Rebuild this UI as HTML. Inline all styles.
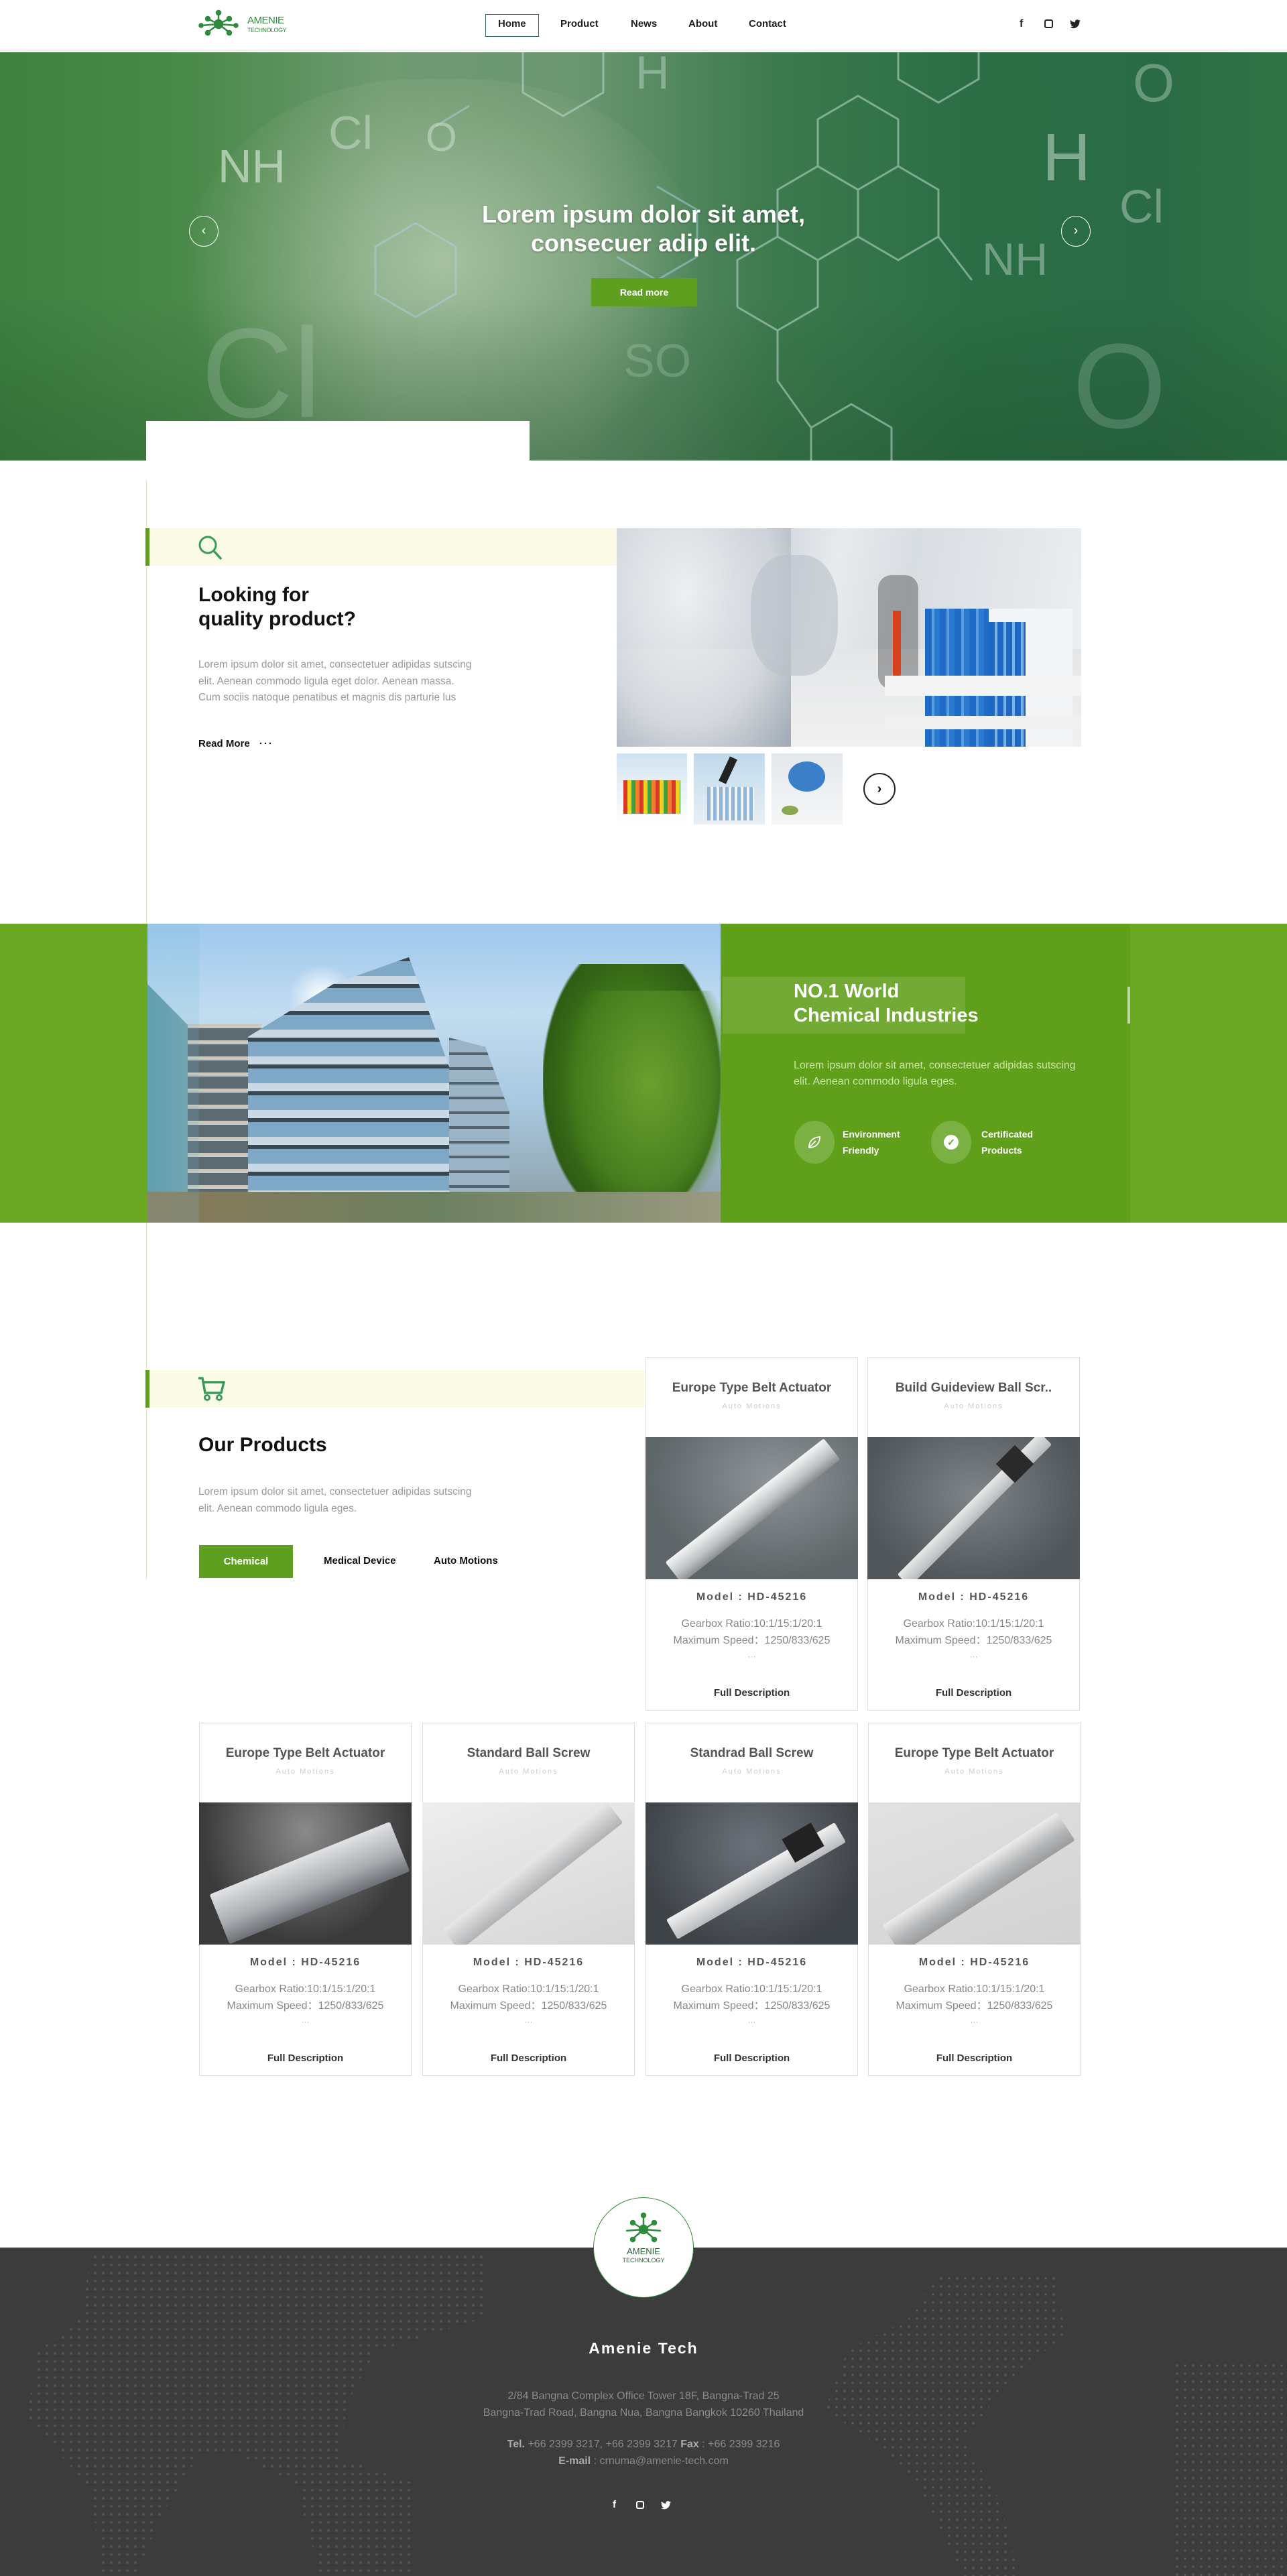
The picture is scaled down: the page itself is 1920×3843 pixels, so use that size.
<!DOCTYPE html>
<html><head><meta charset="utf-8">
<style>
*{margin:0;padding:0;box-sizing:border-box}
body{width:1920px;height:3843px;position:relative;background:#fff;font-family:"Liberation Sans",Arial,sans-serif;overflow:hidden}
.a{position:absolute}
.nav a{position:absolute;top:27px;font-size:15px;font-weight:bold;color:#222;text-decoration:none}
.card{position:absolute;width:317px;height:527px;border:1px solid #ddd;background:#fff;text-align:center}
.card .t{position:absolute;left:0;right:0;top:34px;font-size:19px;font-weight:bold;color:#555}
.card .s{position:absolute;left:0;right:0;top:66px;font-size:11px;color:#ccc;letter-spacing:2px}
.card .im{position:absolute;left:-1px;right:-1px;top:118px;height:212px;overflow:hidden}
.card .m{position:absolute;left:0;right:0;top:348px;font-size:16px;font-weight:bold;color:#555;letter-spacing:2px}
.card .g{position:absolute;left:0;right:0;top:384px;font-size:16px;color:#888;line-height:25px}
.card .d{position:absolute;left:0;right:0;top:438px;font-size:12px;color:#aaa}
.card .f{position:absolute;left:0;right:0;top:491px;font-size:15px;font-weight:bold;color:#333}
.bar{position:absolute;height:34px;border-radius:3px;transform-origin:center}
.ic{position:absolute;width:60px;height:64px;border-radius:50%;background:rgba(255,255,255,.18)}
.dots{position:absolute;background-image:radial-gradient(circle,#555 1.7px,transparent 2.1px);background-size:12px 12px}
</style></head><body>

<!-- HEADER -->
<div class="a" style="left:0;top:0;width:1920px;height:76px;background:#fff;border-bottom:2px solid #f0f0f0"></div>
<svg class="a" style="left:296px;top:14px" width="60" height="44" viewBox="0 0 60 44">
<g stroke="#2e8b3e" stroke-width="2.5" fill="#2e8b3e">
<line x1="30" y1="22" x2="30" y2="6"/><line x1="30" y1="22" x2="14" y2="14"/><line x1="30" y1="22" x2="46" y2="14"/>
<line x1="30" y1="22" x2="14" y2="34"/><line x1="30" y1="22" x2="46" y2="34"/><line x1="30" y1="22" x2="4" y2="24"/><line x1="30" y1="22" x2="56" y2="24"/>
<circle cx="30" cy="22" r="6"/><circle cx="30" cy="5" r="3"/><circle cx="14" cy="14" r="3"/><circle cx="46" cy="14" r="3"/><circle cx="14" cy="35" r="3"/><circle cx="46" cy="35" r="3"/><circle cx="4" cy="24" r="2.5"/><circle cx="56" cy="24" r="2.5"/></g></svg>
<div class="a" style="left:369px;top:24px;font-size:15px;color:#2e8b3e;letter-spacing:-.5px;line-height:13px">AMENIE<br><span style="font-size:9px;color:#2e8b3e">TECHNOLOGY</span></div>
<div class="nav">
<div class="a" style="left:724px;top:21px;width:80px;height:34px;border:1.5px solid #2e6e4a"></div>
<a style="left:743px">Home</a><a style="left:836px">Product</a><a style="left:941px">News</a><a style="left:1027px">About</a><a style="left:1117px">Contact</a>
</div>
<div class="a" style="left:1521px;top:27px;font-size:16px;font-weight:bold;color:#222">f</div>
<div class="a" style="left:1558px;top:29px;width:13px;height:13px;border:2px solid #222;border-radius:3px"></div>
<svg class="a" style="left:1596px;top:29px" width="16" height="14" viewBox="0 0 24 20"><path d="M24 2.4a10 10 0 0 1-2.8.8A5 5 0 0 0 23.3.4a10 10 0 0 1-3.1 1.2A4.9 4.9 0 0 0 11.8 6 14 14 0 0 1 1.7.9a4.9 4.9 0 0 0 1.5 6.6A4.9 4.9 0 0 1 1 6.9a4.9 4.9 0 0 0 3.9 4.8 5 5 0 0 1-2.2.1 4.9 4.9 0 0 0 4.6 3.4A9.9 9.9 0 0 1 0 17.2 14 14 0 0 0 7.5 19.4c9.1 0 14-7.5 14-14v-.6A10 10 0 0 0 24 2.4z" fill="#222"/></svg>

<!-- HERO -->
<div class="a" style="left:0;top:78px;width:1920px;height:609px;overflow:hidden;background:linear-gradient(90deg,#3d8040 0%,#4a8a4a 15%,#6f9a72 30%,#6a9670 45%,#3d7a4e 60%,#2b6e45 75%,#2a6b45 90%,#2f7345 100%)">
 <div class="a" style="left:280px;top:40px;width:760px;height:600px;border-radius:45%;background:radial-gradient(ellipse at 50% 45%,rgba(190,210,180,.7),rgba(150,180,140,.35) 50%,transparent 72%)"></div>
 <div class="a" style="left:0;top:0;width:1920px;height:609px;background:linear-gradient(180deg,transparent 60%,rgba(20,60,30,.25))"></div>
 <svg class="a" style="left:0;top:0" width="1920" height="609" fill="none" stroke="rgba(190,220,210,.55)" stroke-width="3">
  <path d="M1220 100 L1280 65 L1340 100 L1340 170 L1280 205 L1220 170 Z M1160 205 L1220 170 L1280 205 L1280 275 L1220 310 L1160 275 Z M1280 205 L1340 170 L1400 205 L1400 275 L1340 310 L1280 275 Z M1160 275 L1100 310 L1100 380 M1220 310 L1220 380 L1160 415 L1100 380 M1400 275 L1450 340 M1340 0 L1340 40 L1400 75 L1460 40 L1460 0 M780 0 L780 60 L840 95 L900 60 L900 0 M1160 415 L1160 490 L1210 560 L1270 525 L1330 560 L1330 609 M1210 560 L1210 609"/>
  <path d="M650 110 L700 80 M560 290 L620 255 L680 290 L680 360 L620 395 L560 360 Z M980 200 L1040 235 L1040 305 L980 340 L920 305" stroke="rgba(170,210,230,.5)"/>
 </svg>
 <div class="a" style="left:325px;top:130px;font-size:70px;color:rgba(200,220,200,.75)">NH</div>
 <div class="a" style="left:490px;top:80px;font-size:70px;color:rgba(200,220,200,.55)">Cl</div>
 <div class="a" style="left:635px;top:92px;font-size:60px;color:rgba(200,220,200,.6)">O</div>
 <div class="a" style="left:1555px;top:100px;font-size:100px;color:rgba(200,220,210,.55)">H</div>
 <div class="a" style="left:1670px;top:190px;font-size:70px;color:rgba(200,220,210,.45)">Cl</div>
 <div class="a" style="left:1465px;top:270px;font-size:68px;color:rgba(200,220,210,.45)">NH</div>
 <div class="a" style="left:1690px;top:0px;font-size:80px;color:rgba(200,220,210,.4)">O</div>
 <div class="a" style="left:1600px;top:395px;font-size:180px;color:rgba(200,220,210,.22)">O</div>
 <div class="a" style="left:300px;top:370px;font-size:190px;color:rgba(200,220,210,.22)">Cl</div>
 <div class="a" style="left:930px;top:420px;font-size:70px;color:rgba(200,220,210,.25)">SO</div>
 <div class="a" style="left:948px;top:-10px;font-size:70px;color:rgba(200,220,210,.45)">H</div>
</div>
<div class="a" style="left:0;top:298px;width:1920px;text-align:center;font-size:36px;font-weight:bold;color:#fff;line-height:43px;text-shadow:0 1px 3px rgba(0,0,0,.3)">Lorem ipsum dolor sit amet,<br>consecuer adip elit.</div>
<div class="a" style="left:882px;top:415px;width:158px;height:42px;background:#5f9f1f;color:#fff;font-size:14px;font-weight:bold;text-align:center;line-height:42px">Read more</div>
<div class="a" style="left:282px;top:322px;width:44px;height:46px;border:1.5px solid #fff;border-radius:50%;color:#fff;text-align:center;line-height:42px;font-size:20px">‹</div>
<div class="a" style="left:1583px;top:322px;width:44px;height:46px;border:1.5px solid #fff;border-radius:50%;color:#fff;text-align:center;line-height:42px;font-size:20px">›</div>
<div class="a" style="left:218px;top:628px;width:572px;height:59px;background:#fff"></div>

<!-- vertical line -->
<div class="a" style="left:218px;top:716px;width:1px;height:1640px;background:#d6e6c0"></div>

<!-- SECTION 2 -->
<div class="a" style="left:217px;top:788px;width:703px;height:56px;background:#fafae6;border-left:6px solid #5f9f1f"></div>
<svg class="a" style="left:294px;top:797px" width="42" height="40" viewBox="0 0 42 40"><circle cx="16" cy="16" r="12" fill="none" stroke="#3a9a5a" stroke-width="3"/><line x1="25" y1="25" x2="36" y2="37" stroke="#3a9a5a" stroke-width="3.5"/></svg>
<div class="a" style="left:296px;top:870px;font-size:30px;font-weight:bold;color:#111;line-height:36px">Looking for<br>quality product?</div>
<div class="a" style="left:296px;top:980px;font-size:15.5px;color:#9a9a9a;line-height:24.5px;width:520px">Lorem ipsum dolor sit amet, consectetuer adipidas sutscing<br>elit. Aenean commodo ligula eget dolor. Aenean massa.<br>Cum sociis natoque penatibus et magnis dis parturie lus</div>
<div class="a" style="left:296px;top:1101px;font-size:15px;font-weight:bold;color:#111">Read More <span style="margin-left:10px;letter-spacing:2px">···</span></div>
<div class="a" style="left:920px;top:788px;width:693px;height:326px;overflow:hidden;background:linear-gradient(100deg,#dfe3e8 0%,#c4ccd4 25%,#e8ebee 45%,#d8dde2 60%,#eef0f2 100%)">
 <div class="a" style="left:0;top:180px;width:693px;height:146px;background:linear-gradient(180deg,#e4e6e8,#f0f0f0)"></div>
 <div class="a" style="left:0;top:0;width:260px;height:326px;background:radial-gradient(ellipse at 40% 30%,#f5f6f7,#cfd4da 60%,#8a96a4 100%);opacity:.8"></div>
 <div class="a" style="left:200px;top:40px;width:130px;height:180px;border-radius:40%;background:#b8c0c8;opacity:.6"></div>
 <div class="a" style="left:390px;top:70px;width:60px;height:170px;background:#222;opacity:.35;border-radius:20px"></div>
 <div class="a" style="left:480px;top:120px;width:200px;height:210px;background:#f2f4f6"></div>
 <div class="a" style="left:412px;top:123px;width:12px;height:100px;background:#d8401e;border-radius:0 0 6px 6px"></div>
 <div class="a" style="left:460px;top:120px;width:95px;height:210px;background:repeating-linear-gradient(90deg,#1f6cc8 0 10px,#5b9ee0 10px 14px,#2a7ad0 14px 22px)"></div>
 <div class="a" style="left:555px;top:140px;width:55px;height:190px;background:repeating-linear-gradient(90deg,#1e68c4 0 9px,#7ab2e6 9px 13px)"></div>
 <div class="a" style="left:400px;top:220px;width:293px;height:30px;background:#f4f4f4"></div>
 <div class="a" style="left:400px;top:280px;width:293px;height:20px;background:#f0f0f0"></div>
</div>
<div class="a" style="left:920px;top:1124px;width:105px;height:106px;background:linear-gradient(180deg,#cfe3f3 0%,#e6eef4 40%,#fff 100%)"><div class="a" style="left:10px;top:40px;width:85px;height:50px;background:repeating-linear-gradient(90deg,#d83a2a 0 6px,#f0d020 6px 12px,#40a040 12px 18px,#f08030 18px 24px)"></div></div>
<div class="a" style="left:1035px;top:1124px;width:106px;height:106px;background:linear-gradient(180deg,#bfd9ea,#e8f0f5)"><div class="a" style="left:20px;top:50px;width:70px;height:50px;background:repeating-linear-gradient(90deg,#8fb6d8 0 5px,#f0f4f6 5px 9px)"></div><div class="a" style="left:45px;top:5px;width:12px;height:40px;background:#222;transform:rotate(25deg)"></div></div>
<div class="a" style="left:1151px;top:1124px;width:106px;height:106px;background:linear-gradient(180deg,#e4e8ec,#f5f6f7)"><div class="a" style="left:25px;top:12px;width:55px;height:45px;border-radius:50%;background:#3a7fc8"></div><div class="a" style="left:15px;top:78px;width:25px;height:14px;border-radius:50%;background:#8aa850"></div></div>
<div class="a" style="left:1288px;top:1153px;width:48px;height:48px;border:2px solid #222;border-radius:50%;text-align:center;line-height:44px;font-size:20px;font-weight:bold">›</div>

<!-- SECTION 3 GREEN -->
<div class="a" style="left:0;top:1378px;width:1920px;height:446px;background:#6aa823"></div>
<div class="a" style="left:220px;top:1378px;width:855px;height:446px;overflow:hidden;background:linear-gradient(180deg,#9ec8ec 0%,#c2dcf0 30%,#a8c8e0 60%,#8a9aa0 100%)">
 <div class="a" style="left:210px;top:60px;width:100px;height:100px;border-radius:50%;background:radial-gradient(circle,#fff,rgba(255,255,255,0) 70%)"></div>
 <div class="a" style="left:0;top:90px;width:140px;height:356px;background:linear-gradient(90deg,#5a9aa8,#8fa8b0);clip-path:polygon(0 0,100% 40%,100% 100%,0 100%)"></div>
 <div class="a" style="left:60px;top:150px;width:110px;height:296px;background:repeating-linear-gradient(180deg,#c9c6bd 0 6px,#5c6a72 6px 24px)"></div>
 <div class="a" style="left:150px;top:50px;width:320px;height:396px;background:repeating-linear-gradient(180deg,#3b4750 0 6px,#7fa8c6 6px 28px,#c8d8e4 28px 40px);clip-path:polygon(0 30%,40% 10%,75% 0,100% 55%,100% 100%,0 100%)"></div>
 <div class="a" style="left:450px;top:170px;width:90px;height:276px;background:repeating-linear-gradient(180deg,#55636c 0 4px,#9ab4c6 4px 22px);clip-path:polygon(0 0,60% 5%,100% 40%,100% 100%,0 100%)"></div>
 <div class="a" style="left:590px;top:60px;width:265px;height:386px;background:radial-gradient(ellipse at 50% 45%,#4e8a22 0%,#3d7418 45%,#2e5c14 70%,transparent 72%)"></div>
 <div class="a" style="left:620px;top:100px;width:235px;height:346px;background:radial-gradient(ellipse at 55% 40%,#6aa02e,#4a8220 50%,transparent 70%)"></div>
 <div class="a" style="left:0;top:400px;width:855px;height:46px;background:linear-gradient(90deg,#8a7a5a,#6c8060,#9a9a80)"></div>
 <div class="a" style="left:0;top:0;width:77px;height:446px;background:rgba(120,190,210,.18)"></div>
</div>
<div class="a" style="left:1075px;top:1378px;width:611px;height:446px;background:#5f9f1a"></div>
<div class="a" style="left:1078px;top:1457px;width:362px;height:85px;background:rgba(255,255,255,.12)"></div>
<div class="a" style="left:1682px;top:1472px;width:4px;height:55px;background:rgba(255,255,255,.6)"></div>
<div class="a" style="left:1184px;top:1461px;font-size:29px;font-weight:bold;color:#fff;line-height:36px">NO.1 World<br>Chemical Industries</div>
<div class="a" style="left:1184px;top:1578px;font-size:16px;color:#c9e3a8;line-height:24px">Lorem ipsum dolor sit amet, consectetuer adipidas sutscing<br>elit. Aenean commodo ligula eges.</div>
<div class="ic" style="left:1185px;top:1672px"></div>
<svg class="a" style="left:1203px;top:1692px" width="24" height="24" viewBox="0 0 24 24"><path d="M4 20 C4 10 10 5 20 4 C20 14 14 20 4 20 Z M4 20 L14 10" fill="none" stroke="#fff" stroke-width="1.8"/></svg>
<div class="a" style="left:1257px;top:1680px;font-size:14px;font-weight:bold;color:#fff;line-height:24px">Environment<br>Friendly</div>
<div class="ic" style="left:1389px;top:1672px"></div>
<div class="a" style="left:1408px;top:1693px;width:22px;height:22px;border-radius:50%;background:#fff;color:#6aa823;font-size:14px;font-weight:bold;text-align:center;line-height:22px">✓</div>
<div class="a" style="left:1464px;top:1680px;font-size:14px;font-weight:bold;color:#fff;line-height:24px">Certificated<br>Products</div>

<!-- PRODUCTS -->
<div class="a" style="left:217px;top:2044px;width:745px;height:56px;background:#fafae6;border-left:6px solid #5f9f1f"></div>
<svg class="a" style="left:294px;top:2052px" width="44" height="40" viewBox="0 0 44 40"><path d="M2 4 H8 L12 26 H36 L40 10 H10" fill="none" stroke="#3a9a5a" stroke-width="3.5" stroke-linejoin="round"/><circle cx="15" cy="33" r="3.5" fill="none" stroke="#3a9a5a" stroke-width="3"/><circle cx="33" cy="33" r="3.5" fill="none" stroke="#3a9a5a" stroke-width="3"/></svg>
<div class="a" style="left:296px;top:2139px;font-size:30px;font-weight:bold;color:#111">Our Products</div>
<div class="a" style="left:296px;top:2214px;font-size:15.5px;color:#9a9a9a;line-height:24.5px">Lorem ipsum dolor sit amet, consectetuer adipidas sutscing<br>elit. Aenean commodo ligula eges.</div>
<div class="a" style="left:297px;top:2305px;width:140px;height:49px;background:#5f9f1f;color:#fff;font-size:15px;font-weight:bold;text-align:center;line-height:49px">Chemical</div>
<div class="a" style="left:483px;top:2320px;font-size:15px;font-weight:bold;color:#111">Medical Device</div>
<div class="a" style="left:647px;top:2320px;font-size:15px;font-weight:bold;color:#111">Auto Motions</div>

<div class="card" style="left:963px;top:2025px"><div class="t">Europe Type Belt Actuator</div><div class="s">Auto Motions</div>
<div class="im" style="background:radial-gradient(ellipse at 60% 30%,#8e9498,#5e6568 70%)"><div class="bar" style="left:10px;top:90px;width:300px;height:40px;background:linear-gradient(180deg,#f4f4f4,#bfc3c6 60%,#8a8e92);transform:rotate(-38deg)"></div></div>
<div class="m">Model : HD-45216</div><div class="g">Gearbox Ratio:10:1/15:1/20:1<br>Maximum Speed：1250/833/625</div><div class="d">···</div><div class="f">Full Description</div></div>

<div class="card" style="left:1294px;top:2025px"><div class="t">Build Guideview Ball Scr..</div><div class="s">Auto Motions</div>
<div class="im" style="background:radial-gradient(ellipse at 50% 40%,#7e8488,#50565a 75%)"><div class="bar" style="left:10px;top:95px;width:300px;height:26px;background:linear-gradient(180deg,#e8e8e8,#b5b8bb);transform:rotate(-45deg)"></div><div class="a" style="left:200px;top:20px;width:40px;height:40px;background:#2a2a2a;transform:rotate(-45deg)"></div></div>
<div class="m">Model : HD-45216</div><div class="g">Gearbox Ratio:10:1/15:1/20:1<br>Maximum Speed：1250/833/625</div><div class="d">···</div><div class="f">Full Description</div></div>

<div class="card" style="left:297px;top:2570px"><div class="t">Europe Type Belt Actuator</div><div class="s">Auto Motions</div>
<div class="im" style="background:radial-gradient(ellipse at 50% 20%,#8a8a8a,#3a3a3a 70%)"><div class="bar" style="left:20px;top:80px;width:290px;height:80px;background:linear-gradient(180deg,#e0e2e4,#a8acb0 60%,#6c7074);transform:rotate(-22deg)"></div></div>
<div class="m">Model : HD-45216</div><div class="g">Gearbox Ratio:10:1/15:1/20:1<br>Maximum Speed：1250/833/625</div><div class="d">···</div><div class="f">Full Description</div></div>

<div class="card" style="left:630px;top:2570px"><div class="t">Standard Ball Screw</div><div class="s">Auto Motions</div>
<div class="im" style="background:linear-gradient(160deg,#eeeeee,#d6d6d6)"><div class="bar" style="left:10px;top:90px;width:310px;height:40px;background:linear-gradient(180deg,#e8e8e8,#b0b2b4);transform:rotate(-38deg)"></div></div>
<div class="m">Model : HD-45216</div><div class="g">Gearbox Ratio:10:1/15:1/20:1<br>Maximum Speed：1250/833/625</div><div class="d">···</div><div class="f">Full Description</div></div>

<div class="card" style="left:963px;top:2570px"><div class="t">Standrad Ball Screw</div><div class="s">Auto Motions</div>
<div class="im" style="background:radial-gradient(ellipse at 50% 30%,#6c727a,#3e4348 75%)"><div class="bar" style="left:20px;top:100px;width:290px;height:34px;background:linear-gradient(180deg,#f0f0f0,#b8bbbe);transform:rotate(-30deg)"></div><div class="a" style="left:210px;top:40px;width:50px;height:40px;background:#222;transform:rotate(-30deg)"></div></div>
<div class="m">Model : HD-45216</div><div class="g">Gearbox Ratio:10:1/15:1/20:1<br>Maximum Speed：1250/833/625</div><div class="d">···</div><div class="f">Full Description</div></div>

<div class="card" style="left:1295px;top:2570px"><div class="t">Europe Type Belt Actuator</div><div class="s">Auto Motions</div>
<div class="im" style="background:linear-gradient(160deg,#e2e2e2,#d2d2d2)"><div class="bar" style="left:10px;top:95px;width:310px;height:50px;background:linear-gradient(180deg,#ececec,#b2b4b6 60%,#9a9c9e);transform:rotate(-33deg)"></div></div>
<div class="m">Model : HD-45216</div><div class="g">Gearbox Ratio:10:1/15:1/20:1<br>Maximum Speed：1250/833/625</div><div class="d">···</div><div class="f">Full Description</div></div>

<!-- FOOTER -->
<div class="a" style="left:0;top:3353px;width:1920px;height:490px;background:#3c3c3c;overflow:hidden">
 <div class="dots" style="left:40px;top:8px;width:800px;height:490px;clip-path:polygon(12% 0,85% 0,85% 20%,65% 30%,60% 45%,58% 62%,72% 70%,72% 100%,55% 100%,50% 70%,40% 62%,32% 62%,25% 80%,20% 100%,14% 100%,12% 72%,0 50%,2% 30%,10% 20%)"></div>
 <div class="dots" style="left:1230px;top:40px;width:690px;height:450px;clip-path:polygon(25% 0,50% 0,52% 20%,40% 35%,30% 55%,38% 75%,42% 100%,30% 100%,20% 70%,10% 55%,0 45%,5% 25%,18% 15%)"></div>
 <div class="dots" style="left:1750px;top:170px;width:170px;height:320px"></div>
</div>
<div class="a" style="left:885px;top:3278px;width:150px;height:150px;border-radius:50%;background:#fff;border:1.5px solid #2e8b3e"></div>
<svg class="a" style="left:930px;top:3300px" width="60" height="50" viewBox="0 0 60 50">
<g stroke="#2e8b3e" stroke-width="2.5" fill="#2e8b3e">
<line x1="30" y1="26" x2="30" y2="6"/><line x1="30" y1="26" x2="14" y2="16"/><line x1="30" y1="26" x2="46" y2="16"/>
<line x1="30" y1="26" x2="14" y2="40"/><line x1="30" y1="26" x2="46" y2="40"/><line x1="30" y1="26" x2="4" y2="28"/><line x1="30" y1="26" x2="56" y2="28"/>
<circle cx="30" cy="26" r="6"/><circle cx="30" cy="5" r="3"/><circle cx="14" cy="16" r="3"/><circle cx="46" cy="16" r="3"/><circle cx="14" cy="41" r="3"/><circle cx="46" cy="41" r="3"/></g></svg>
<div class="a" style="left:885px;top:3353px;width:150px;text-align:center;font-size:13px;color:#2e5e3a;line-height:12px">AMENIE<br><span style="font-size:9px">TECHNOLOGY</span></div>
<div class="a" style="left:0;top:3490px;width:1920px;text-align:center;font-size:23px;font-weight:bold;color:#fff;letter-spacing:2px">Amenie Tech</div>
<div class="a" style="left:0;top:3563px;width:1920px;text-align:center;font-size:16px;color:#8a8a8a;line-height:24.5px">2/84 Bangna Complex Office Tower 18F, Bangna-Trad 25<br>Bangna-Trad Road, Bangna Nua, Bangna Bangkok 10260 Thailand</div>
<div class="a" style="left:0;top:3635px;width:1920px;text-align:center;font-size:16px;color:#8a8a8a;line-height:24.5px"><b style="color:#aaa">Tel.</b> +66 2399 3217, +66 2399 3217 <b style="color:#aaa">Fax</b> : +66 2399 3216<br><b style="color:#aaa">E-mail</b> : crnuma@amenie-tech.com</div>
<div class="a" style="left:914px;top:3728px;font-size:15px;font-weight:bold;color:#fff">f</div>
<div class="a" style="left:949px;top:3731px;width:12px;height:12px;border:2px solid #fff;border-radius:3px"></div>
<svg class="a" style="left:986px;top:3731px" width="15" height="13" viewBox="0 0 24 20"><path d="M24 2.4a10 10 0 0 1-2.8.8A5 5 0 0 0 23.3.4a10 10 0 0 1-3.1 1.2A4.9 4.9 0 0 0 11.8 6 14 14 0 0 1 1.7.9a4.9 4.9 0 0 0 1.5 6.6A4.9 4.9 0 0 1 1 6.9a4.9 4.9 0 0 0 3.9 4.8 5 5 0 0 1-2.2.1 4.9 4.9 0 0 0 4.6 3.4A9.9 9.9 0 0 1 0 17.2 14 14 0 0 0 7.5 19.4c9.1 0 14-7.5 14-14v-.6A10 10 0 0 0 24 2.4z" fill="#fff"/></svg>
</body></html>
